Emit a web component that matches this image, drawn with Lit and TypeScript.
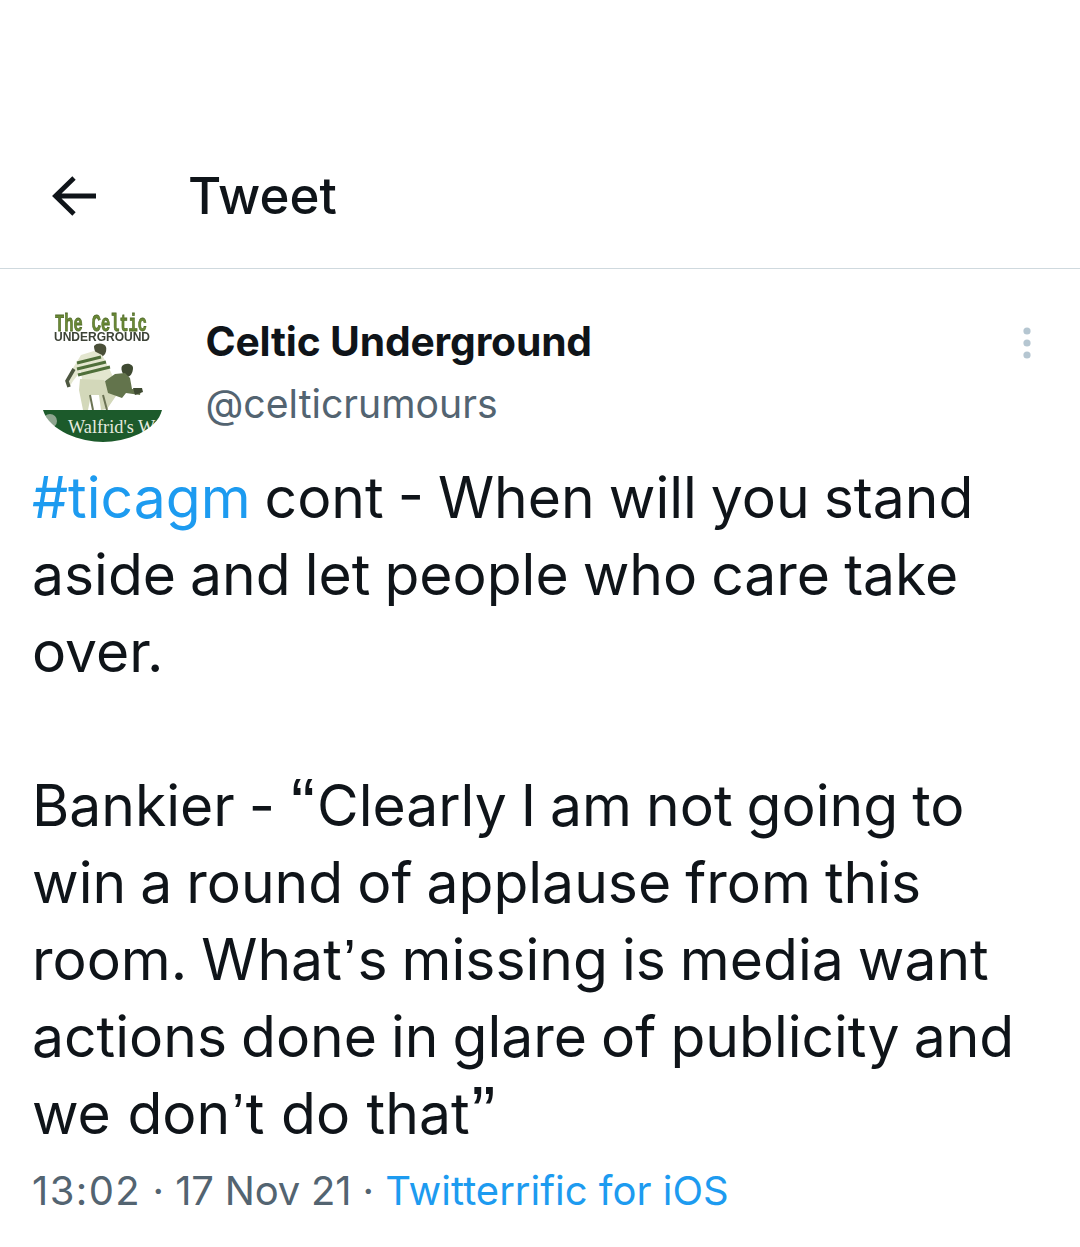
import { LitElement, html, css } from "lit";
import { customElement } from "lit/decorators.js";

@customElement("app-root")
export class AppRoot extends LitElement {
  static styles = css`
    :host { display: block; width: 1080px; height: 1247px; background: #fff; overflow: hidden; font-family: Inter, "Noto Sans", sans-serif; color: #0f1419; }
    .head { height: 268px; border-bottom: 1px solid #cfd9de; display: flex; align-items: flex-end; padding-left: 50px; }
    .headin { display: flex; align-items: center; height: 52px; margin-bottom: 46px; gap: 90px; }
    .back { width: 48px; height: 46px; display: block; }
    .title { font-size: 51px; font-weight: 500; line-height: 52px; }
    .user { display: flex; align-items: flex-start; padding: 34px 0 0 33px; height: 190px; box-sizing: border-box; }
    .avatar { width: 140px; height: 140px; display: block; flex: none; filter: blur(0.35px); }
    .names { margin-left: 32.500px; padding-top: 13px; }
    .name { font-size: 40.8px; font-weight: 700; line-height: 50px; letter-spacing: -0.18px; }
    .handle { font-size: 39.2px; line-height: 50px; color: #536471; margin-top: 13px; }
    .more { margin-left: auto; margin-right: 46px; margin-top: 24px; width: 14px; height: 36px; display: block; }
    .text { margin: 0; padding: 0 32px; font-size: 57px; line-height: 77px; white-space: pre-line; word-spacing: -2px; }
    .q { font-family: "Liberation Sans", sans-serif; font-size: 72px; line-height: 0; vertical-align: -3px; padding: 0 2px; }
    .a { font-family: "Liberation Sans", sans-serif; line-height: 0; padding: 0 1.500px; }
    .tail { word-spacing: 0.500px; }
    .tag, .src { color: #1d9bf0; }
    .meta { padding: 0 32px; margin-top: 14px; font-size: 40px; line-height: 50px; color: #536471; }
    .time { letter-spacing: 1.400px; }
    .date { letter-spacing: -0.200px; }
  `;
  render() {
    return html`
      <div class="head"><div class="headin">
        <svg class="back" viewBox="0 0 48 46"><path d="M46 23H5M24 5 5.500 23 24 41" fill="none" stroke="#0f1419" stroke-width="4.800"/></svg>
        <div class="title">Tweet</div>
      </div></div>
      <div class="user">
        <svg class="avatar" viewBox="0 0 140 140">
          <defs><clipPath id="c"><path d="M10 107H129C124 128 92 139 70 139S16 128 10 107Z"/></clipPath></defs>
          <text x="22" y="28" font-family="Liberation Mono" font-weight="700" font-size="23" fill="#6b8a35" stroke="#4f6a28" stroke-width="0.800" textLength="92" lengthAdjust="spacingAndGlyphs">The Celtic</text>
          <text x="21" y="38" font-family="Liberation Sans" font-weight="700" font-size="12" fill="#3c4236" textLength="96" lengthAdjust="spacingAndGlyphs">UNDERGROUND</text>
          <path d="M61 43c3-4 11-3 12 1 1 4-1 9-5 10-4 0-7-6-7-11Z" fill="#4a4f38"/>
          <path d="M48 52l13-4 8 4 7 13 4 9-9 4-22-1-1-9-8 10-3 5-3-2 6-16Z" fill="#e3e6cf"/>
          <path d="M44 60l24-6M44 66l29-7M45 72l32-8" stroke="#4f6f3a" stroke-width="3"/>
          <path d="M41 66 34 78l2 6" fill="none" stroke="#4d5740" stroke-width="3.500"/>
          <path d="M47 76l24 1 12 16-9 13-6 1-2-15-8 0-3 15-5 0-4-20Z" fill="#d3d8ba"/>
          <path d="M57 92l3 15M70 92l4 15" stroke="#6b7354" stroke-width="2" fill="none"/>
          <path d="M89 63c4-4 11-2 11 2 0 5-3 9-6 9-3 0-7-7-5-11Z" fill="#3f4a32"/>
          <path d="M72 78l10-7 10-1 5 5 2 11 9 1-1 5-14-2-4 5-14-5Z" fill="#63744c"/>
          <path d="M100 85l9 0 1 4-8 3Z" fill="#3f4a32"/>
          <g clip-path="url(#c)">
            <rect x="0" y="100" width="140" height="40" fill="#1c5a2b"/>
            <circle cx="17" cy="118" r="7" fill="#8ea58f"/>
            <text x="35" y="130" font-family="Liberation Serif" font-size="19" fill="#e5eadf" textLength="94" lengthAdjust="spacingAndGlyphs">Walfrid's Wa</text>
          </g>
        </svg>
        <div class="names">
          <div class="name">Celtic Underground</div>
          <div class="handle">@celticrumours</div>
        </div>
        <svg class="more" viewBox="0 0 14 36"><circle cx="7" cy="4" r="3.600" fill="#b5c6d1"/><circle cx="7" cy="16" r="3.600" fill="#b5c6d1"/><circle cx="7" cy="28" r="3.600" fill="#b5c6d1"/></svg>
      </div>
      <p class="text"><span class="tag">#ticagm</span> cont - When will you stand
aside and let people who care take
over.

Bankier - <span class="q">“</span>Clearly I am not going to
win a round of applause from this
room. What<span class="a">’</span>s missing is media want
actions done in glare of publicity and
<span class="tail">we don<span class="a">’</span>t do that<span class="q">”</span></span></p>
      <div class="meta"><span class="time">13:02</span> · <span class="date">17 Nov 21</span> · <span class="src">Twitterrific for iOS</span></div>
    `;
  }
}
